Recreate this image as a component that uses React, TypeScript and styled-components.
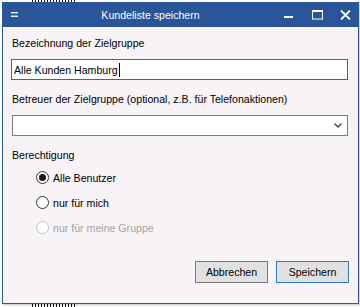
import React from "react";
import styled, { createGlobalStyle } from "styled-components";

const GlobalStyle = createGlobalStyle`
  html, body { margin: 0; padding: 0; background: #ffffff; }
  body { font-family: "Liberation Sans", Arial, sans-serif; font-size: 10.6px; color: #000; }
  * { box-sizing: border-box; }
`;

const Desktop = styled.div`
  position: relative;
  width: 360px;
  height: 307px;
  overflow: hidden;
  background: #ffffff;
`;

const Backdrop = styled.div`
  display: flex;
  flex-direction: column;
  justify-content: space-between;
  height: 307px;
  padding-left: 32px;
`;

const Fragment = styled.div<{ $h: number }>`
  width: 44px;
  height: ${(p) => p.$h}px;
  background: repeating-linear-gradient(
    90deg,
    #111 0px,
    #111 1px,
    transparent 1px,
    transparent 3px
  );
`;

const Window = styled.div`
  position: absolute;
  left: 2px;
  top: 2px;
  width: 357px;
  height: 302px;
  border: 1px solid #2b5797;
  border-top: none;
  background: #f7f3f7;
  display: flex;
  flex-direction: column;
  box-shadow: 1px 1px 2px rgba(0, 0, 0, 0.25);
`;

const TitleBar = styled.div`
  height: 25px;
  margin: 0 -1px;
  background: #2a5699;
  color: #ffffff;
  display: flex;
  align-items: center;
  flex-shrink: 0;
`;

const MenuIcon = styled.div`
  width: 24px;
  display: flex;
  justify-content: center;
  padding-left: 2px;
`;

const Title = styled.div`
  flex: 1;
  text-align: center;
  font-size: 10.6px;
  padding-top: 1px;
`;

const Controls = styled.div`
  display: flex;
  align-items: center;
`;

const CtrlButton = styled.div`
  width: 28px;
  height: 25px;
  display: flex;
  align-items: center;
  justify-content: center;
`;

const Body = styled.div`
  flex: 1;
  display: flex;
  flex-direction: column;
  padding: 9px 9px 0 8px;
`;

const Label = styled.div<{ $mt?: number }>`
  height: 14px;
  line-height: 14px;
  padding-left: 1px;
  margin-top: ${(p) => p.$mt ?? 0}px;
  color: #000;
`;

const TextInput = styled.div`
  margin-top: 9px;
  height: 21px;
  width: 337px;
  border: 1px solid #2a6bb3;
  background: #ffffff;
  display: flex;
  align-items: center;
  padding-left: 2px;
`;

const Caret = styled.span`
  display: inline-block;
  width: 1px;
  height: 14px;
  background: #000;
  margin-left: 1px;
`;

const Select = styled.div`
  margin-top: 9px;
  margin-left: 1px;
  height: 21px;
  width: 336px;
  border: 1px solid #7a7a7a;
  background: #ffffff;
  display: flex;
  align-items: center;
  justify-content: flex-end;
  padding-right: 5px;
`;

const RadioGroup = styled.div`
  display: flex;
  flex-direction: column;
  gap: 12px;
  margin-top: 9px;
  padding-left: 25px;
`;

const RadioRow = styled.div<{ $disabled?: boolean }>`
  display: flex;
  align-items: center;
  height: 13px;
  gap: 4px;
  color: ${(p) => (p.$disabled ? "#a3a3a3" : "#000")};
`;

const RadioCircle = styled.div<{ $checked?: boolean; $disabled?: boolean }>`
  width: 13px;
  height: 13px;
  border-radius: 50%;
  border: 1px solid ${(p) => (p.$disabled ? "#c4c4c4" : "#333333")};
  background: #ffffff;
  display: flex;
  align-items: center;
  justify-content: center;
  &::after {
    content: "";
    display: ${(p) => (p.$checked ? "block" : "none")};
    width: 7px;
    height: 7px;
    border-radius: 50%;
    background: #1a1a1a;
  }
`;

const ButtonRow = styled.div`
  margin-top: auto;
  margin-bottom: 20px;
  display: flex;
  justify-content: flex-end;
  gap: 8px;
`;

const Button = styled.div<{ $default?: boolean }>`
  width: 73px;
  height: 22px;
  background: #e1e1e1;
  border: 1px solid ${(p) => (p.$default ? "#2a7ad1" : "#7a7a7a")};
  display: flex;
  align-items: center;
  justify-content: center;
  color: #000;
`;

export default function App() {
  return (
    <>
      <GlobalStyle />
      <Desktop>
        <Backdrop>
          <Fragment $h={2} />
          <Fragment $h={3} />
        </Backdrop>
        <Window>
          <TitleBar>
            <MenuIcon>
              <svg width="8" height="6" viewBox="0 0 8 6">
                <rect x="0" y="0" width="7" height="1.3" fill="#fff" />
                <rect x="0" y="3.6" width="7" height="1.3" fill="#fff" />
              </svg>
            </MenuIcon>
            <Title>Kundeliste speichern</Title>
            <Controls>
              <CtrlButton>
                <svg width="10" height="10" viewBox="0 0 10 10">
                  <rect x="0" y="6" width="9" height="2" fill="#fff" />
                </svg>
              </CtrlButton>
              <CtrlButton>
                <svg width="11" height="10" viewBox="0 0 11 10">
                  <rect x="0.5" y="0.5" width="10" height="8.5" fill="none" stroke="#fff" strokeWidth="1" />
                  <rect x="0" y="0" width="11" height="2" fill="#fff" />
                </svg>
              </CtrlButton>
              <CtrlButton>
                <svg width="11" height="10" viewBox="0 0 11 10">
                  <path d="M1 0.5 L10 9.5 M10 0.5 L1 9.5" stroke="#fff" strokeWidth="1.8" />
                </svg>
              </CtrlButton>
            </Controls>
          </TitleBar>
          <Body>
            <Label>Bezeichnung der Zielgruppe</Label>
            <TextInput>
              Alle Kunden Hamburg
              <Caret />
            </TextInput>
            <Label $mt={12}>Betreuer der Zielgruppe (optional, z.B. für Telefonaktionen)</Label>
            <Select>
              <svg width="8" height="5" viewBox="0 0 8 5">
                <path d="M0.5 0.5 L4 4 L7.5 0.5" fill="none" stroke="#444" strokeWidth="1.4" />
              </svg>
            </Select>
            <Label $mt={12}>Berechtigung</Label>
            <RadioGroup>
              <RadioRow>
                <RadioCircle $checked />
                Alle Benutzer
              </RadioRow>
              <RadioRow>
                <RadioCircle />
                nur für mich
              </RadioRow>
              <RadioRow $disabled>
                <RadioCircle $disabled />
                nur für meine Gruppe
              </RadioRow>
            </RadioGroup>
            <ButtonRow>
              <Button>Abbrechen</Button>
              <Button $default>Speichern</Button>
            </ButtonRow>
          </Body>
        </Window>
      </Desktop>
    </>
  );
}
